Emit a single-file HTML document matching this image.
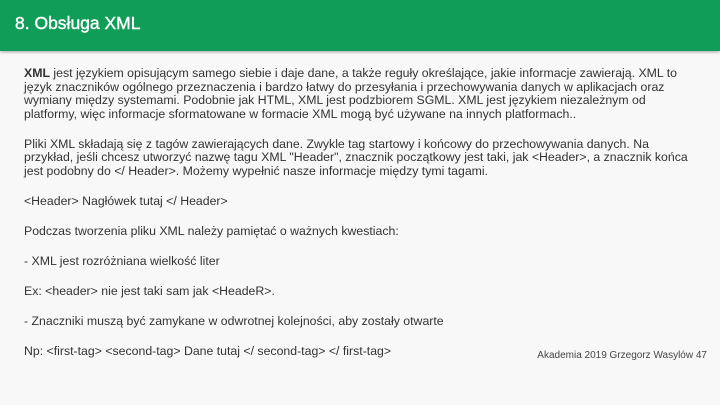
<!DOCTYPE html>
<html><head><meta charset="utf-8"><style>
body{margin:0;width:720px;height:405px;background:#f8f8f8;font-family:"Liberation Sans",sans-serif;overflow:hidden;position:relative}
.h{position:absolute;left:0;top:0;width:720px;height:51px;background:#0f9d58;box-shadow:0 1px 3px rgba(0,0,0,.35)}
.h div{position:absolute;left:15px;top:13px;color:#fff;font-size:17.5px;-webkit-text-stroke:0.4px #fff}
.c{position:absolute;left:24px;top:67px;width:690px;color:#333;font-size:12.3px;line-height:13.6px;white-space:nowrap}
.c p{margin:0 0 16.4px 0}
.f{position:absolute;right:13px;top:350px;color:#444;font-size:10px}
</style></head><body>
<div class="h"><div>8. Obsługa XML</div></div>
<div class="c">
<p><b>XML</b> jest językiem opisującym samego siebie i daje dane, a także reguły określające, jakie informacje zawierają. XML to<br>język znaczników ogólnego przeznaczenia i bardzo łatwy do przesyłania i przechowywania danych w aplikacjach oraz<br>wymiany między systemami. Podobnie jak HTML, XML jest podzbiorem SGML. XML jest językiem niezależnym od<br>platformy, więc informacje sformatowane w formacie XML mogą być używane na innych platformach..</p>
<p>Pliki XML składają się z tagów zawierających dane. Zwykle tag startowy i końcowy do przechowywania danych. Na<br>przykład, jeśli chcesz utworzyć nazwę tagu XML "Header", znacznik początkowy jest taki, jak &lt;Header&gt;, a znacznik końca<br>jest podobny do &lt;/ Header&gt;. Możemy wypełnić nasze informacje między tymi tagami.</p>
<p>&lt;Header&gt; Nagłówek tutaj &lt;/ Header&gt;</p>
<p>Podczas tworzenia pliku XML należy pamiętać o ważnych kwestiach:</p>
<p>- XML jest rozróżniana wielkość liter</p>
<p>Ex: &lt;header&gt; nie jest taki sam jak &lt;HeadeR&gt;.</p>
<p>- Znaczniki muszą być zamykane w odwrotnej kolejności, aby zostały otwarte</p>
<p>Np: &lt;first-tag&gt; &lt;second-tag&gt; Dane tutaj &lt;/ second-tag&gt; &lt;/ first-tag&gt;</p>
</div>
<div class="f">Akademia 2019 Grzegorz Wasylów 47</div>
</body></html>
